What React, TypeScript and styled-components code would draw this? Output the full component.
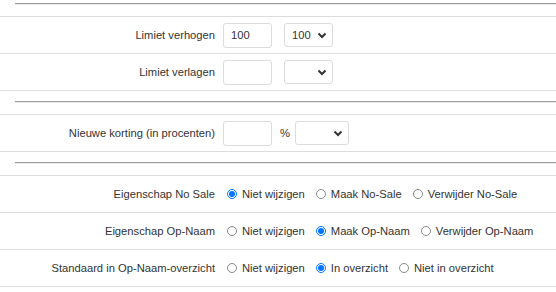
import React from 'react';
import styled, { createGlobalStyle } from 'styled-components';

const GlobalStyle = createGlobalStyle`
  html, body {
    margin: 0;
    padding: 0;
    background: #ffffff;
  }
  body {
    font-family: 'Liberation Sans', Arial, sans-serif;
    font-size: 11.2px;
    color: #333333;
  }
`;

const Page = styled.div`
  width: 556px;
  height: 292px;
  overflow: hidden;
`;

const Divider = styled.div<{ first?: boolean }>`
  height: ${props => (props.first ? '16px' : '24px')};
  border-top: ${props => (props.first ? 'none' : '1px solid #dddddd')};
  box-sizing: border-box;
  padding-top: ${props => (props.first ? '3px' : '10px')};
  padding-left: 15px;
`;

const Rule = styled.div`
  height: 0;
  border-top: 1px solid #9c9c9c;
  border-bottom: 1px solid #ececec;
`;

const Row = styled.div<{ last?: boolean }>`
  display: flex;
  align-items: center;
  box-sizing: border-box;
  border-top: 1px solid #dddddd;
  border-bottom: ${props => (props.last ? '1px solid #dddddd' : 'none')};
  height: ${props => (props.last ? '38px' : '37px')};
`;

const Label = styled.div`
  width: 223px;
  padding-right: 8px;
  box-sizing: border-box;
  text-align: right;
  white-space: nowrap;
  flex-shrink: 0;
`;

const Controls = styled.div`
  display: flex;
  align-items: center;
`;

const TextInput = styled.input`
  width: 49px;
  height: 25px;
  box-sizing: border-box;
  border: 1px solid #dcdcdc;
  border-radius: 3px;
  padding: 0 7px;
  font-family: inherit;
  font-size: inherit;
  color: #333333;
  outline: none;
`;

const SelectBox = styled.div<{ width: number; gap: number }>`
  display: flex;
  align-items: center;
  justify-content: space-between;
  width: ${props => props.width}px;
  height: 24px;
  box-sizing: border-box;
  margin-left: ${props => props.gap}px;
  padding: 0 5px 0 7px;
  border: 1px solid #dcdcdc;
  border-radius: 3px;
  background: #ffffff;
`;

const Percent = styled.span`
  margin-left: 8px;
`;

const RadioOption = styled.label`
  display: flex;
  align-items: center;
  margin-right: 7px;
  white-space: nowrap;
`;

const RadioMark = styled.span<{ checked?: boolean }>`
  position: relative;
  width: 10px;
  height: 10px;
  box-sizing: border-box;
  border-radius: 50%;
  margin: 0 5px 0 4px;
  border: 1px solid ${props => (props.checked ? '#0075ff' : '#8a8a8a')};
  background: #ffffff;

  &::after {
    content: '';
    display: ${props => (props.checked ? 'block' : 'none')};
    position: absolute;
    left: 1px;
    top: 1px;
    width: 6px;
    height: 6px;
    border-radius: 50%;
    background: #0075ff;
  }
`;

const Chevron = () => (
  <svg width="10" height="7" viewBox="0 0 10 7">
    <path d="M1.5 1.5l3.5 3.5 3.5-3.5" fill="none" stroke="#333" strokeWidth="2" />
  </svg>
);

const Select = ({ value, width, gap }: { value?: string; width: number; gap: number }) => (
  <SelectBox width={width} gap={gap}>
    <span>{value}</span>
    <Chevron />
  </SelectBox>
);

interface RadioRowProps {
  label: string;
  options: string[];
  selected: number;
  last?: boolean;
}

const RadioRow = ({ label, options, selected, last }: RadioRowProps) => (
  <Row last={last}>
    <Label>{label}</Label>
    <Controls>
      {options.map((opt, i) => (
        <RadioOption key={opt}>
          <RadioMark checked={i === selected} />
          {opt}
        </RadioOption>
      ))}
    </Controls>
  </Row>
);

const App = () => (
  <Page>
    <GlobalStyle />
    <Divider first>
      <Rule />
    </Divider>
    <Row>
      <Label>Limiet verhogen</Label>
      <Controls>
        <TextInput defaultValue="100" />
        <Select value="100" width={49} gap={12} />
      </Controls>
    </Row>
    <Row>
      <Label>Limiet verlagen</Label>
      <Controls>
        <TextInput />
        <Select width={49} gap={12} />
      </Controls>
    </Row>
    <Divider>
      <Rule />
    </Divider>
    <Row>
      <Label>Nieuwe korting (in procenten)</Label>
      <Controls>
        <TextInput />
        <Percent>%</Percent>
        <Select width={54} gap={5} />
      </Controls>
    </Row>
    <Divider>
      <Rule />
    </Divider>
    <RadioRow
      label="Eigenschap No Sale"
      options={['Niet wijzigen', 'Maak No-Sale', 'Verwijder No-Sale']}
      selected={0}
    />
    <RadioRow
      label="Eigenschap Op-Naam"
      options={['Niet wijzigen', 'Maak Op-Naam', 'Verwijder Op-Naam']}
      selected={1}
    />
    <RadioRow
      label="Standaard in Op-Naam-overzicht"
      options={['Niet wijzigen', 'In overzicht', 'Niet in overzicht']}
      selected={1}
      last
    />
  </Page>
);

export default App;
